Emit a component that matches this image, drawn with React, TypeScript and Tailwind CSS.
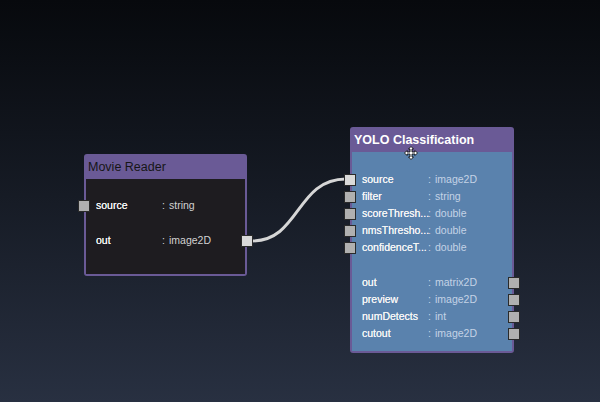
import React from "react";

type Port = { name: string; type: string; linked?: boolean };

const MOVIE_IN: Port[] = [{ name: "source", type: "string" }];
const MOVIE_OUT: Port[] = [{ name: "out", type: "image2D", linked: true }];

const YOLO_IN: Port[] = [
  { name: "source", type: "image2D", linked: true },
  { name: "filter", type: "string" },
  { name: "scoreThresh...", type: "double" },
  { name: "nmsThresho...", type: "double" },
  { name: "confidenceT...", type: "double" },
];
const YOLO_OUT: Port[] = [
  { name: "out", type: "matrix2D" },
  { name: "preview", type: "image2D" },
  { name: "numDetects", type: "int" },
  { name: "cutout", type: "image2D" },
];

const Socket = ({ side, linked }: { side: "in" | "out"; linked?: boolean }) => (
  <span
    className={`absolute top-1/2 -translate-y-1/2 w-3 h-3 border-[1.5px] border-[#2a2a2a] ${
      linked ? "bg-[#d9d9d9]" : "bg-[#b0b0b0]"
    } ${side === "in" ? "-left-[8px]" : "-right-[8px]"}`}
  />
);

const Row = ({
  port,
  side,
  typeColor,
}: {
  port: Port;
  side: "in" | "out";
  typeColor: string;
}) => (
  <div className="relative flex items-center h-[17px] pl-[10px]">
    <Socket side={side} linked={port.linked} />
    <span className="w-[66px] text-[#f4f4f4] whitespace-nowrap [text-shadow:0_0_0.5px_#ffffff]">
      {port.name}
    </span>
    <span className={`w-[7px] ${typeColor}`}>:</span>
    <span className={typeColor}>{port.type}</span>
  </div>
);

const Node = ({
  title,
  left,
  top,
  width,
  bold,
  bodyClass,
  typeColor,
  inputs,
  outputs,
  bodyPad,
}: {
  title: string;
  left: number;
  top: number;
  width: number;
  bold?: boolean;
  bodyClass: string;
  typeColor: string;
  inputs: Port[];
  outputs: Port[];
  bodyPad: string;
}) => (
  <div
    className="absolute border-2 border-[#6a5a96] rounded-[3px] bg-[#6a5a96]"
    style={{ left, top, width }}
  >
    <div
      className={`h-[23px] flex items-center px-[2px] ${
        bold
          ? "text-[12.5px] font-bold text-white"
          : "text-[12.5px] text-[#161616]"
      }`}
    >
      {title}
    </div>
    <div className={`${bodyClass} ${bodyPad} text-[10.5px]`}>
      {inputs.map((p) => (
        <Row key={p.name} port={p} side="in" typeColor={typeColor} />
      ))}
      <div className="h-[18px]" />
      {outputs.map((p) => (
        <Row key={p.name} port={p} side="out" typeColor={typeColor} />
      ))}
    </div>
  </div>
);

const MoveCursor = () => (
  <svg
    className="absolute"
    style={{ left: 404, top: 146 }}
    width="14"
    height="14"
    viewBox="0 0 14 14"
  >
    <path
      d="M7 0.5 L9.5 3 L8 3 L8 6 L11 6 L11 4.5 L13.5 7 L11 9.5 L11 8 L8 8 L8 11 L9.5 11 L7 13.5 L4.5 11 L6 11 L6 8 L3 8 L3 9.5 L0.5 7 L3 4.5 L3 6 L6 6 L6 3 L4.5 3 Z"
      fill="#ffffff"
      stroke="#111111"
      strokeWidth="0.9"
      strokeLinejoin="round"
    />
  </svg>
);

export default function App() {
  return (
    <div
      className="relative w-[600px] h-[402px] overflow-hidden bg-linear-to-b from-[#07090d] to-[#283041]"
      style={{ fontFamily: '"Liberation Sans", Arial, sans-serif' }}
    >
      <svg className="absolute inset-0" width="600" height="402">
        <path
          d="M252 241 C 300 241, 296 179, 346 179"
          fill="none"
          stroke="#d6d6d6"
          strokeWidth="3"
        />
      </svg>

      <Node
        title="Movie Reader"
        left={84}
        top={154}
        width={163}
        bodyClass="bg-[#1e1c20]"
        typeColor="text-[#d2d2d2]"
        inputs={MOVIE_IN}
        outputs={MOVIE_OUT}
        bodyPad="pt-[18px] pb-[25px]"
      />

      <Node
        title="YOLO Classification"
        left={350}
        top={127}
        width={164}
        bold
        bodyClass="bg-[#5a82ad]"
        typeColor="text-[#c4d3e6]"
        inputs={YOLO_IN}
        outputs={YOLO_OUT}
        bodyPad="pt-[19px] pb-[9px]"
      />

      <MoveCursor />
    </div>
  );
}
